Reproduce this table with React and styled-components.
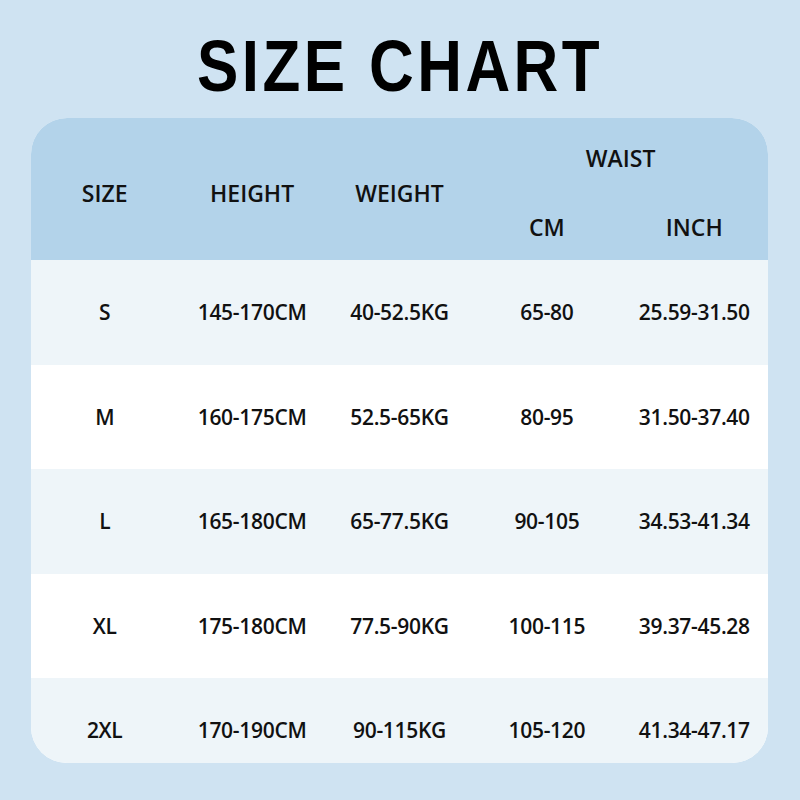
import React from 'react';
import styled, {createGlobalStyle} from 'styled-components';

const GlobalStyle = createGlobalStyle`
  html, body {
    margin: 0;
    padding: 0;
    background: #cfe3f2;
  }
`;

const rows = [
    {size: 'S', height: '145-170CM', weight: '40-52.5KG', cm: '65-80', inch: '25.59-31.50'},
    {size: 'M', height: '160-175CM', weight: '52.5-65KG', cm: '80-95', inch: '31.50-37.40'},
    {size: 'L', height: '165-180CM', weight: '65-77.5KG', cm: '90-105', inch: '34.53-41.34'},
    {size: 'XL', height: '175-180CM', weight: '77.5-90KG', cm: '100-115', inch: '39.37-45.28'},
    {size: '2XL', height: '170-190CM', weight: '90-115KG', cm: '105-120', inch: '41.34-47.17'},
];

const App = () => {
    return (
        <Page>
            <GlobalStyle/>
            <Title>SIZE CHART</Title>
            <Card>
                <Header>
                    <HeadCell $span>SIZE</HeadCell>
                    <HeadCell $span>HEIGHT</HeadCell>
                    <HeadCell $span>WEIGHT</HeadCell>
                    <HeadCell $wide>WAIST</HeadCell>
                    <HeadCell $sub>CM</HeadCell>
                    <HeadCell $sub>INCH</HeadCell>
                </Header>
                {rows.map((r, i) => (
                    <Row key={r.size} $shaded={i % 2 === 0}>
                        <Cell>{r.size}</Cell>
                        <Cell>{r.height}</Cell>
                        <Cell>{r.weight}</Cell>
                        <Cell>{r.cm}</Cell>
                        <Cell>{r.inch}</Cell>
                    </Row>
                ))}
            </Card>
        </Page>
    );
};

const Page = styled.div`
  width: 800px;
  height: 800px;
  padding-top: 31px;
  box-sizing: border-box;
  display: flex;
  flex-direction: column;
  align-items: center;
  background: #cfe3f2;
`;

const Title = styled.h1`
  margin: 0 0 16px;
  font-family: "Liberation Sans", Arial, sans-serif;
  font-weight: 700;
  font-size: 72px;
  line-height: 71px;
  letter-spacing: 4px;
  color: #000;
  transform: scaleX(0.86);
  white-space: nowrap;
`;

const Card = styled.div`
  width: 737px;
  height: 645px;
  margin-left: -1px;
  border-radius: 36px;
  overflow: hidden;
  background: #fff;
  font-family: "Open Sans", sans-serif;
  color: #111;
`;

const Header = styled.div`
  display: grid;
  grid-template-columns: repeat(5, 1fr);
  grid-template-rows: 80px 62px;
  height: 142px;
  background: #b3d3ea;
`;

const HeadCell = styled.div`
  display: flex;
  align-items: center;
  justify-content: center;
  font-size: 23px;
  font-weight: 600;
  grid-row: ${p => (p.$span ? '1 / span 2' : p.$sub ? '2' : '1')};
  grid-column: ${p => (p.$wide ? '4 / span 2' : 'auto')};
  padding-top: ${p => (p.$span ? '8px' : '0')};
  padding-bottom: ${p => (p.$sub ? '4px' : '0')};
`;

const Row = styled.div`
  display: grid;
  grid-template-columns: repeat(5, 1fr);
  height: 104.5px;
  background: ${p => (p.$shaded ? '#eef5f9' : '#ffffff')};
`;

const Cell = styled.div`
  display: flex;
  align-items: center;
  justify-content: center;
  font-size: 21px;
  font-weight: 600;
  letter-spacing: -0.3px;
`;

export default App;
